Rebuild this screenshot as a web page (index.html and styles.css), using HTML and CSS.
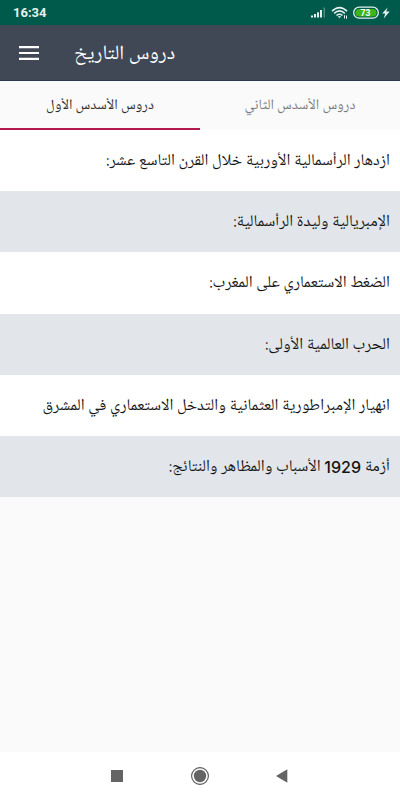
FILE: index.html
```html
<!DOCTYPE html>
<html lang="ar">
<head>
  <meta charset="UTF-8">
  <meta name="viewport" content="width=device-width, initial-scale=1.0">
  <title>دروس التاريخ</title>
  <link rel="stylesheet" href="styles.css">
</head>
<body>

  <!-- Status bar -->
  <div class="status-bar">
    <span class="time">16:34</span>
    <svg class="status-icons" width="82" height="16" viewBox="0 0 82 16">
      <g fill="#e4f2ee">
        <rect x="1" y="10.5" width="2" height="2"/>
        <rect x="4" y="9" width="2" height="3.5"/>
        <rect x="7" y="7.3" width="2" height="5.2"/>
        <rect x="10" y="5" width="2" height="7.5"/>
        <rect x="13.7" y="2.5" width="1" height="10" opacity=".5"/>
      </g>
      <g fill="none" stroke="#e4f2ee" stroke-width="1.6">
        <path d="M22 6.2Q29.5 -1 37 6.2"/>
        <path d="M24.2 8.4Q29.5 3.4 34.8 8.4"/>
        <path d="M26.5 10.5Q29.5 8 32.5 10.5"/>
      </g>
      <path d="M27.7 11.3h3.6l-1.8 2z" fill="#e4f2ee"/>
      <path d="M34.5 10.2v3.3M36.5 10.5v3.3" stroke="#e4f2ee" stroke-width="1"/>
      <rect x="43.7" y="2.2" width="24.6" height="11" rx="5.5" fill="none" stroke="#e4f2ee" stroke-width="1.3"/>
      <rect x="45.4" y="3.9" width="21.2" height="7.6" rx="3.8" fill="#3fb618"/>
      <text x="55.5" y="10.8" class="battery-level">73</text>
      <path d="M77.6 2.5L72.2 8.5h3l-1.4 5 5.8-6.9h-3.4z" fill="#e4f2ee"/>
    </svg>
  </div>

  <!-- App bar -->
  <div class="app-bar">
    <svg class="menu-icon" width="20" height="14" viewBox="0 0 20 14">
      <path d="M0 1.2h20M0 7h20M0 12.8h20" stroke="#fff" stroke-width="2.2"/>
    </svg>
    <h1 dir="rtl">دروس التاريخ</h1>
  </div>

  <!-- Tabs -->
  <div class="tabs">
    <div class="tab active" dir="rtl">دروس الأسدس الأول</div>
    <div class="tab" dir="rtl">دروس الأسدس الثاني</div>
  </div>

  <!-- Lesson list -->
  <ul class="lessons" dir="rtl">
    <li>ازدهار الرأسمالية الأوربية خلال القرن التاسع عشر:</li>
    <li>الإمبريالية وليدة الرأسمالية:</li>
    <li>الضغط الاستعماري على المغرب:</li>
    <li>الحرب العالمية الأولى:</li>
    <li>انهيار الإمبراطورية العثمانية والتدخل الاستعماري في المشرق</li>
    <li>أزمة <span class="year">1929</span> الأسباب والمظاهر والنتائج:</li>
  </ul>

  <!-- System navigation -->
  <div class="nav-bar">
    <svg width="20" height="20" viewBox="0 0 20 20"><rect x="4" y="4" width="12" height="12" fill="#646464"/></svg>
    <svg width="20" height="20" viewBox="0 0 20 20">
      <circle cx="10" cy="10" r="8.4" fill="none" stroke="#555" stroke-width="1.1"/>
      <circle cx="10" cy="10" r="6.2" fill="#646464"/>
    </svg>
    <svg width="20" height="20" viewBox="0 0 20 20"><path d="M3 10L14.3 3.2v13.6z" fill="#646464"/></svg>
  </div>

</body>
</html>
```

FILE: styles.css
```css
body {
  margin: 0;
  height: 800px;
  display: flex;
  flex-direction: column;
  overflow: hidden;
  background: #fafafa;
  font-family: "Noto Naskh Arabic UI", "Noto Sans", sans-serif;
}

/* Status bar */
.status-bar {
  height: 25px;
  flex: none;
  display: flex;
  justify-content: space-between;
  align-items: center;
  box-sizing: border-box;
  padding: 0 8px 0 13px;
  background: #005a4c;
  color: #e4f2ee;
}

.time {
  font: bold 13px Roboto, sans-serif;
}

.battery-level {
  font: bold 8.5px Roboto, sans-serif;
  text-anchor: middle;
  fill: #fff;
}

/* App bar */
.app-bar {
  height: 56px;
  flex: none;
  display: flex;
  align-items: center;
  gap: 35px;
  box-sizing: border-box;
  padding: 0 19px;
  background: #404856;
  border-bottom: 1px solid #2c3850;
}

.app-bar h1 {
  margin: 2px 0 0;
  font-size: 20.4px;
  font-weight: normal;
  color: #fff;
}

/* Tabs */
.tabs {
  height: 49px;
  flex: none;
  display: flex;
}

.tab {
  flex: 1;
  display: flex;
  justify-content: center;
  align-items: center;
  border-bottom: 2px solid transparent;
  font-size: 14.5px;
  color: #7d7d7d;
}

.tab.active {
  color: #303030;
  border-bottom-color: #b5174f;
}

/* Lessons */
.lessons {
  flex: 1;
  margin: 0;
  padding: 0;
  list-style: none;
}

.lessons li {
  height: 61.2px;
  display: flex;
  align-items: center;
  box-sizing: border-box;
  padding: 0 10px;
  background: #fff;
  font-size: 16.4px;
  white-space: pre;
  color: #151515;
}

.lessons li:nth-child(even) {
  background: #e2e5ea;
}

.year {
  font-family: Inter, sans-serif;
  font-size: 16px;
  font-weight: 500;
}

/* System navigation */
.nav-bar {
  height: 48px;
  flex: none;
  display: flex;
  justify-content: center;
  align-items: center;
  gap: 63px;
  background: #fff;
}
```
